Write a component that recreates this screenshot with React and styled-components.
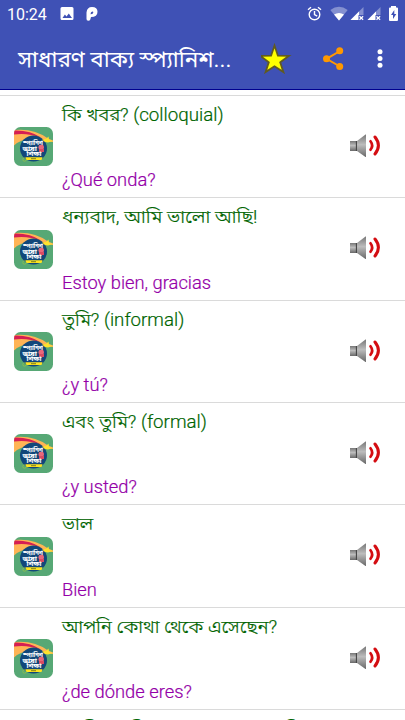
import React from 'react';
import styled, { createGlobalStyle } from 'styled-components';

const GlobalStyle = createGlobalStyle`
  body {
    margin: 0;
    background: #fff;
    overflow: hidden;
  }

  * {
    box-sizing: border-box;
  }
`;

const Screen = styled.div`
  display: flex;
  flex-direction: column;
  width: 405px;
  height: 720px;
  overflow: hidden;
  background: #fff;
  font-family: Roboto, "Noto Sans Bengali", "Noto Sans", sans-serif;
`;

const Header = styled.header`
  flex: none;
  height: 90px;
  background: #3f51b5;
  border-bottom: 1px solid #00008f;
  color: #fff;
`;

const StatusBar = styled.div`
  display: flex;
  align-items: center;
  height: 28px;
  padding: 0 5px 0 7px;
`;

const Clock = styled.span`
  width: 53px;
  font-size: 16px;
  line-height: 28px;
  padding-top: 1px;
`;

const StatusIcons = styled.svg`
  display: block;
  flex: none;
  margin-left: ${props => props.$end ? 'auto' : 0};
`;

const Toolbar = styled.div`
  display: flex;
  align-items: center;
  height: 61px;
  padding-left: 18px;
`;

const Heading = styled.h1`
  flex: none;
  width: 243px;
  margin: 0;
  font-size: 22.5px;
  font-weight: 400;
  line-height: 32px;
  white-space: nowrap;
`;

const Fitted = styled.span`
  display: inline-block;
  transform: scaleX(${props => props.$scale || 1});
  transform-origin: left center;
  white-space: nowrap;
`;

const Actions = styled.div`
  display: flex;
  align-items: center;
  height: 61px;

  svg {
    display: block;
  }
`;

const List = styled.div`
  flex: none;
  padding-top: 5px;
`;

const Row = styled.div`
  display: flex;
  align-items: center;
  height: 102.35px;
  padding: 0 23px 0 14px;
  border-top: 1px solid #dadada;
`;

const Texts = styled.div`
  display: flex;
  flex: 1;
  flex-direction: column;
  justify-content: space-between;
  height: 100%;
  padding: 7px 0 5px 9px;
`;

const Phrase = styled.div`
  height: 24px;
  font-size: 18.4px;
  font-weight: 300;
  line-height: 24px;
  color: #006400;
  -webkit-text-stroke: 0.2px #006400;
`;

const Translation = styled.div`
  height: 24px;
  font-size: 18.1px;
  font-weight: 300;
  line-height: 24px;
  color: #9400a8;
  -webkit-text-stroke: 0.2px #9400a8;
`;

const Thumb = styled.svg`
  display: block;
  flex: none;
`;

const SpeakerIcon = styled.svg`
  display: block;
  flex: none;
  margin-bottom: 1.5px;
`;

const phrases = [
  { text: 'কি খবর? (colloquial)', translation: '¿Qué onda?', scale: 1.019 },
  { text: 'ধন্যবাদ, আমি ভালো আছি!', translation: 'Estoy bien, gracias', scale: 1.053 },
  { text: 'তুমি? (informal)', translation: '¿y tú?', scale: 1.017 },
  { text: 'এবং তুমি? (formal)', translation: '¿y usted?', scale: 1.018 },
  { text: 'ভাল', translation: 'Bien', scale: 1.03 },
  { text: 'আপনি কোথা থেকে এসেছেন?', translation: '¿de dónde eres?', scale: 1.033 },
  { text: 'আমি ফ্লোরিডা রাজ্য থেকে এসেছি', translation: '', scale: 1.03 },
];

const Logo = () => (
  <Thumb width="39" height="39" viewBox="0 0 39 39">
    <defs>
      <clipPath id="tile"><rect width="39" height="39" rx="6.5" /></clipPath>
    </defs>
    <g clipPath="url(#tile)">
      <rect width="39" height="39" fill="#57a875" />
      <path d="M0 3Q20 1 34 11.5L39 13.5V15L22 12.500Q9 10 0 18.500Z" fill="#ffb455" />
      <path d="M0 3.500Q16 3 27 10.500Q13 5.500 0 7.500Z" fill="#d51f53" />
      <ellipse cx="19.500" cy="21.500" rx="13.500" ry="13" fill="#12477a" />
      <circle cx="27.200" cy="20.300" r="2.700" fill="#e9677b" />
      <path d="M25 25v-3h5v3z" fill="#d94b63" />
      <path d="M28 12.500l4-.5 2.500-2.500.5 3.500 4 1-5 1.500-3-.5z" fill="#ffe22d" />
      <circle cx="10.500" cy="32.500" r="1.700" fill="none" stroke="#9bc643" strokeWidth=".7" />
      <path d="M11.500 30.300h17l-1 2.700h-15z" fill="#ffe420" />
      <path d="M17 31.700h5" stroke="#5c651a" strokeWidth=".8" />
    </g>
    <g fill="#fff" fontFamily="Noto Sans Bengali, sans-serif" fontWeight="700" fontSize="5.400">
      <text x="9" y="18" textLength="20" lengthAdjust="spacingAndGlyphs">স্প্যানিশ</text>
      <text x="8.500" y="23.800" textLength="14.500" lengthAdjust="spacingAndGlyphs">ভাষা</text>
      <text x="12.500" y="29.400" textLength="15" lengthAdjust="spacingAndGlyphs">শিক্ষা</text>
    </g>
  </Thumb>
);

const Speaker = () => (
  <SpeakerIcon width="32" height="24" viewBox="0 0 32 24">
    <defs>
      <linearGradient id="metal" x2="0" y2="1">
        <stop stopColor="#777" />
        <stop offset=".45" stopColor="#bdbdbd" />
        <stop offset="1" stopColor="#686868" />
      </linearGradient>
    </defs>
    <rect y="7" width="6" height="10" fill="url(#metal)" />
    <path d="M7 7l8.500-6.500H16v22.500h-.5L7 17z" fill="url(#metal)" />
    <path d="M6.400 7v10" stroke="#333" strokeWidth="1" />
    <path d="M20.500 7.200Q23.800 11.500 20.500 15.800" fill="none" stroke="#d40d12" strokeWidth="2.700" strokeLinecap="round" />
    <path d="M25 3Q31.800 11.500 25 20" fill="none" stroke="#d40d12" strokeWidth="3" strokeLinecap="round" />
  </SpeakerIcon>
);

const NoSim = ({ x }) => (
  <g transform={`translate(${x} 0)`}>
    <path d="M13 7v13H0z" fill="#8490d0" />
    <path d="M8.500 11.500V20H0z" fill="#fff" />
    <path d="M8 15h5.500v5.500H8z" fill="#3f51b5" />
    <path d="M9 16.200l3.600 3.600m0-3.600L9 19.800" stroke="#fff" strokeWidth="1.300" />
  </g>
);

const App = () => (
  <Screen>
    <GlobalStyle />
    <Header>
      <StatusBar>
        <Clock>10:24</Clock>
        <StatusIcons width="40" height="28" viewBox="0 0 40 28">
          <path fillRule="evenodd" fill="#fff" d="M2 7h10q1.500 0 1.500 1.500v10q0 1.500-1.500 1.500H2Q.5 20 .5 18.500v-10Q.5 7 2 7zm.5 11h9.500l-3.200-4.500-2.300 3-1.600-2z" />
          <path fillRule="evenodd" fill="#fff" d="M26.500 12.500Q27 7 32 7q5.500 0 5.500 4.700 0 5.300-6.500 5.300l-.7 2.500q-.5 1.200-2 1.200-2-.1-1.800-2zm4.500-.2-.5 2q2.700.2 2.800-1.800 0-2-2.300-.2z" />
        </StatusIcons>
        <StatusIcons $end width="95" height="28" viewBox="305 0 95 28">
          <g fill="none" stroke="#fff" strokeWidth="1.400">
            <circle cx="314.500" cy="14.500" r="5.300" />
            <path d="M314.500 11v3.500l2.700 1.600M308 9.800l3-2.500M318 7.300l3 2.500" />
          </g>
          <path d="M330.300 10Q339 3.500 347.700 10L339 20.500z" fill="#8490d0" />
          <path d="M334 14.500Q339 11.500 344 14.500L339 20.500z" fill="#fff" />
          <NoSim x={350.500} />
          <NoSim x={367.500} />
          <path fillRule="evenodd" fill="#fff" d="M391 6h5v1.500h1q1 0 1 1V20q0 1-1 1h-7q-1 0-1-1V8.500q0-1 1-1h1zm3.300 4-3.300 5h2v4l3.300-5h-2z" />
        </StatusIcons>
      </StatusBar>
      <Toolbar>
        <Heading><Fitted>সাধারণ বাক্য স্প্যানিশ...</Fitted></Heading>
        <Actions>
          <svg width="144" height="61" viewBox="261 28 144 61">
            <path d="M274.500 45.500l3.400 10.200 11 .1-8.700 6.500 3.200 9.700-8.900-5.800-8.900 5.800 3.200-9.700-8.700-6.500 11-.1z" fill="#ff0" stroke="#615b20" strokeWidth="1.800" />
            <g fill="#ff9800">
              <path d="M340 51l-13.500 7.800L340 66.500" fill="none" stroke="#ff9800" strokeWidth="2" />
              <circle cx="326.500" cy="58.800" r="3.500" />
              <circle cx="339.700" cy="50.800" r="3.500" />
              <circle cx="339.700" cy="66.500" r="3.500" />
            </g>
            <g fill="#fff">
              <circle cx="380" cy="51.700" r="2.500" />
              <circle cx="380" cy="58.500" r="2.500" />
              <circle cx="380" cy="65.300" r="2.500" />
            </g>
          </svg>
        </Actions>
      </Toolbar>
    </Header>
    <List>
      {phrases.map(({ text, translation, scale }) => (
        <Row key={text}>
          <Logo />
          <Texts>
            <Phrase><Fitted $scale={scale}>{text}</Fitted></Phrase>
            <Translation><Fitted $scale={1.013}>{translation}</Fitted></Translation>
          </Texts>
          <Speaker />
        </Row>
      ))}
    </List>
  </Screen>
);

export default App;
